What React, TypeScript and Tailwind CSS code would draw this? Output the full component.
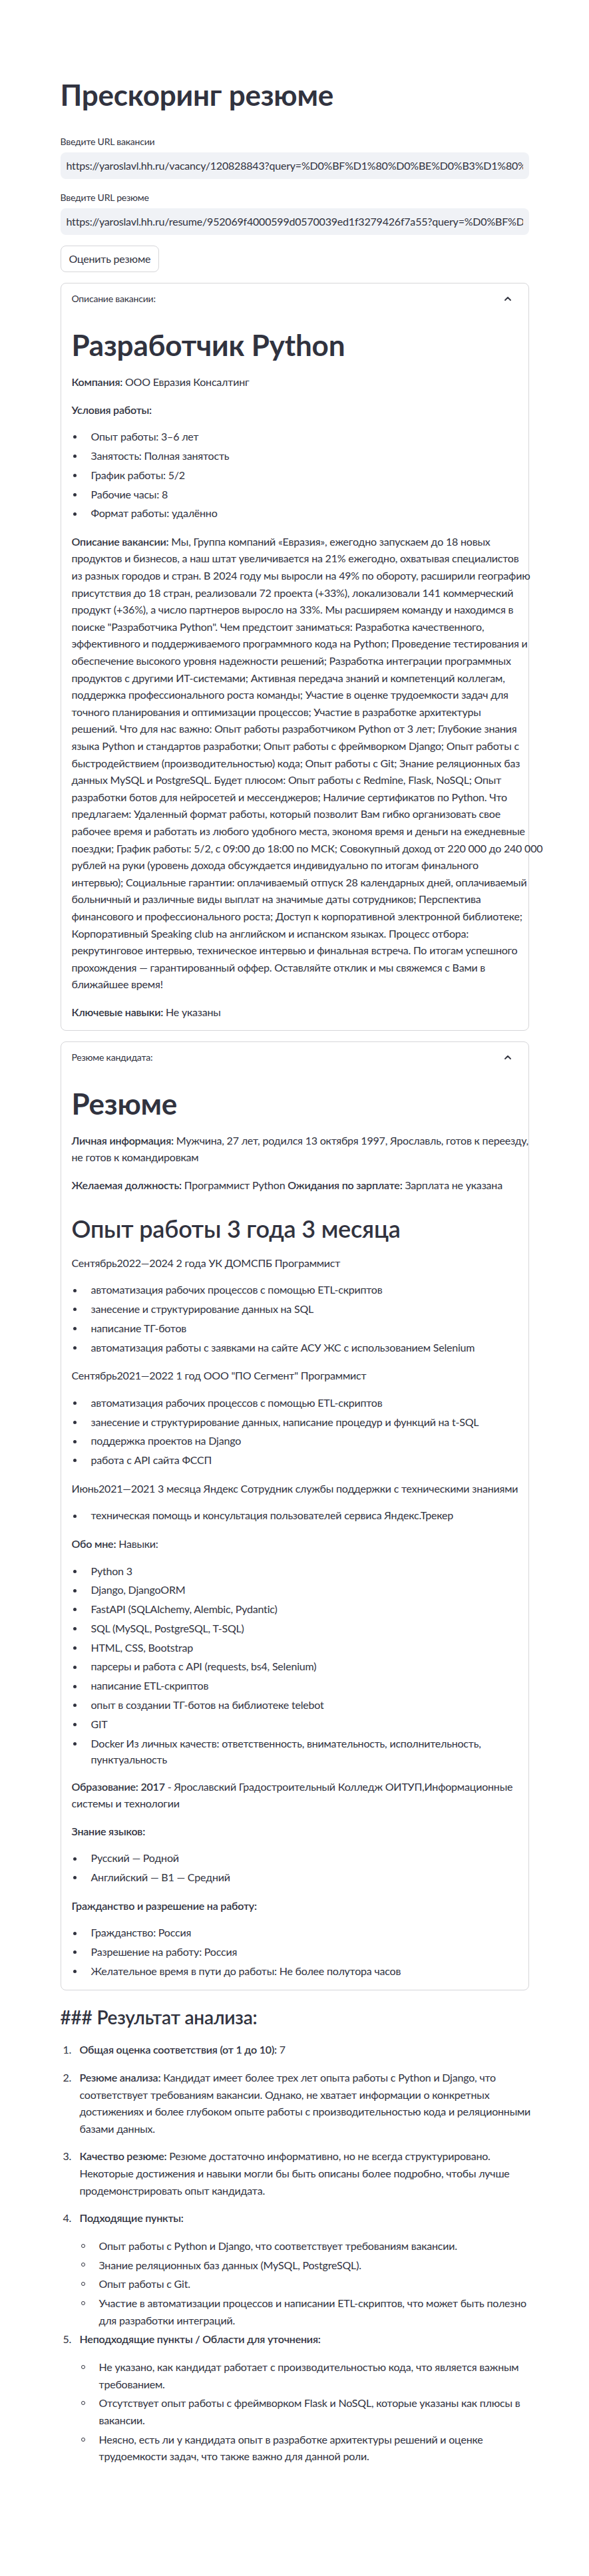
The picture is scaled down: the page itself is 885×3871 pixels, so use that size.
import React from "react";

const vacancyText: string[] = [
  " Мы, Группа компаний «Евразия», ежегодно запускаем до 18 новых",
  "продуктов и бизнесов, а наш штат увеличивается на 21% ежегодно, охватывая специалистов",
  "из разных городов и стран. В 2024 году мы выросли на 49% по обороту, расширили географию",
  "присутствия до 18 стран, реализовали 72 проекта (+33%), локализовали 141 коммерческий",
  "продукт (+36%), а число партнеров выросло на 33%. Мы расширяем команду и находимся в",
  "поиске \"Разработчика Python\". Чем предстоит заниматься: Разработка качественного,",
  "эффективного и поддерживаемого программного кода на Python; Проведение тестирования и",
  "обеспечение высокого уровня надежности решений; Разработка интеграции программных",
  "продуктов с другими ИТ-системами; Активная передача знаний и компетенций коллегам,",
  "поддержка профессионального роста команды; Участие в оценке трудоемкости задач для",
  "точного планирования и оптимизации процессов; Участие в разработке архитектуры",
  "решений. Что для нас важно: Опыт работы разработчиком Python от 3 лет; Глубокие знания",
  "языка Python и стандартов разработки; Опыт работы с фреймворком Django; Опыт работы с",
  "быстродействием (производительностью) кода; Опыт работы с Git; Знание реляционных баз",
  "данных MySQL и PostgreSQL. Будет плюсом: Опыт работы с Redmine, Flask, NoSQL; Опыт",
  "разработки ботов для нейросетей и мессенджеров; Наличие сертификатов по Python. Что",
  "предлагаем: Удаленный формат работы, который позволит Вам гибко организовать свое",
  "рабочее время и работать из любого удобного места, экономя время и деньги на ежедневные",
  "поездки; График работы: 5/2, с 09:00 до 18:00 по МСК; Совокупный доход от 220 000 до 240 000",
  "рублей на руки (уровень дохода обсуждается индивидуально по итогам финального",
  "интервью); Социальные гарантии: оплачиваемый отпуск 28 календарных дней, оплачиваемый",
  "больничный и различные виды выплат на значимые даты сотрудников; Перспектива",
  "финансового и профессионального роста; Доступ к корпоративной электронной библиотеке;",
  "Корпоративный Speaking club на английском и испанском языках. Процесс отбора:",
  "рекрутинговое интервью, техническое интервью и финальная встреча. По итогам успешного",
  "прохождения — гарантированный оффер. Оставляйте отклик и мы свяжемся с Вами в",
  "ближайшее время!",
];

function Lines({ lines }: { lines: string[] }) {
  return (
    <>
      {lines.map((l, i) => (
        <React.Fragment key={i}>
          {i > 0 && <br />}
          {l}
        </React.Fragment>
      ))}
    </>
  );
}

function Dot() {
  return (
    <span className="w-[29px] shrink-0 h-[25.6px] flex items-center pl-[2px]">
      <span className="w-[5px] h-[5px] rounded-full bg-[#31333f]" />
    </span>
  );
}

function Ring() {
  return (
    <span className="w-[29px] shrink-0 h-[25.6px] flex items-center pl-[2px]">
      <span className="w-[6px] h-[6px] rounded-full border border-[#31333f]" />
    </span>
  );
}

function Bullets({ items, className = "mb-4" }: { items: (string | string[])[]; className?: string }) {
  return (
    <ul className={className}>
      {items.map((it, i) => (
        <li key={i} className="flex my-[3.2px]">
          <Dot />
          <span className="whitespace-nowrap">
            {Array.isArray(it) ? <Lines lines={it} /> : it}
          </span>
        </li>
      ))}
    </ul>
  );
}

function SubList({ items }: { items: (string | string[])[] }) {
  return (
    <ul className="flex flex-col gap-[3.2px]">
      {items.map((it, i) => (
        <li key={i} className="flex">
          <Ring />
          <span className="whitespace-nowrap">
            {Array.isArray(it) ? <Lines lines={it} /> : it}
          </span>
        </li>
      ))}
    </ul>
  );
}

function Chevron() {
  return (
    <svg width="14" height="14" viewBox="0 0 14 14" fill="none" className="mr-[8px]">
      <path d="M3 9 L7 5 L11 9" stroke="#31333f" strokeWidth="1.8" strokeLinecap="round" strokeLinejoin="round" />
    </svg>
  );
}

function Expander({ title, children, pb }: { title: string; children: React.ReactNode; pb: string }) {
  return (
    <div className="border border-[#d6d6d9] rounded-lg">
      <div className="flex items-center justify-between px-4 py-3 text-sm leading-[1.6]">
        <span>{title}</span>
        <Chevron />
      </div>
      <div className={`px-4 ${pb}`}>{children}</div>
    </div>
  );
}

function Field({ label, value }: { label: string; value: string }) {
  return (
    <div>
      <div className="h-6 flex items-center text-sm mb-1">{label}</div>
      <input
        readOnly
        value={value}
        className="w-full h-10 rounded-lg bg-[#f0f2f6] border border-transparent px-2 text-base outline-none"
      />
    </div>
  );
}

export default function App() {
  return (
    <div className="min-h-screen bg-white text-[#31333f] font-[family-name:Lato,sans-serif] tracking-[-0.2px]">
      <main className="w-[736px] mx-auto px-4 pt-24 pb-40 flex flex-col gap-4">
        <h1 className="pt-5 pb-4 text-[44px] leading-[1.2] font-bold">Прескоринг резюме</h1>

        <Field
          label="Введите URL вакансии"
          value="https://yaroslavl.hh.ru/vacancy/120828843?query=%D0%BF%D1%80%D0%BE%D0%B3%D1%80%D0%B0%D0%BC%D0%BC%D0%B8%D1%81%D1%82"
        />
        <Field
          label="Введите URL резюме"
          value="https://yaroslavl.hh.ru/resume/952069f4000599d0570039ed1f3279426f7a55?query=%D0%BF%D1%80%D0%BE%D0%B3%D1%80"
        />

        <div>
          <button className="h-10 px-3 rounded-lg border border-[#d6d6d9] bg-white text-base">
            Оценить резюме
          </button>
        </div>

        <Expander title="Описание вакансии:" pb="pb-[14px]">
          <h1 className="pt-5 pb-4 text-[44px] leading-[1.2] font-bold">Разработчик Python</h1>
          <p className="leading-[1.6] mb-4">
            <strong className="font-semibold">Компания:</strong> ООО Евразия Консалтинг
          </p>
          <p className="leading-[1.6] mb-4 font-semibold">Условия работы:</p>
          <Bullets
            items={[
              "Опыт работы: 3–6 лет",
              "Занятость: Полная занятость",
              "График работы: 5/2",
              "Рабочие часы: 8",
              "Формат работы: удалённо",
            ]}
          />
          <p className="leading-[1.6] mb-4 whitespace-nowrap">
            <strong className="font-semibold">Описание вакансии:</strong>
            <Lines lines={vacancyText} />
          </p>
          <p className="leading-[1.6] whitespace-nowrap">
            <strong className="font-semibold">Ключевые навыки:</strong> Не указаны
          </p>
        </Expander>

        <Expander title="Резюме кандидата:" pb="pb-[11px]">
          <h1 className="pt-5 pb-4 text-[44px] leading-[1.2] font-bold">Резюме</h1>
          <p className="leading-[1.6] mb-4 whitespace-nowrap">
            <strong className="font-semibold">Личная информация:</strong> Мужчина, 27 лет, родился 13 октября 1997, Ярославль, готов к переезду,
            <br />
            не готов к командировкам
          </p>
          <p className="leading-[1.6] mb-4 whitespace-nowrap">
            <strong className="font-semibold">Желаемая должность:</strong> Программист Python{" "}
            <strong className="font-semibold">Ожидания по зарплате:</strong> Зарплата не указана
          </p>
          <h2 className="py-4 text-[36px] leading-[1.2] font-semibold">Опыт работы 3 года 3 месяца</h2>
          <p className="leading-[1.6] mb-4 whitespace-nowrap">Сентябрь2022—2024 2 года УК ДОМСПБ Программист</p>
          <Bullets
            items={[
              "автоматизация рабочих процессов с помощью ETL-скриптов",
              "занесение и структурирование данных на SQL",
              "написание ТГ-ботов",
              "автоматизация работы с заявками на сайте АСУ ЖС с использованием Selenium",
            ]}
          />
          <p className="leading-[1.6] mb-4 whitespace-nowrap">Сентябрь2021—2022 1 год ООО "ПО Сегмент" Программист</p>
          <Bullets
            items={[
              "автоматизация рабочих процессов с помощью ETL-скриптов",
              "занесение и структурирование данных, написание процедур и функций на t-SQL",
              "поддержка проектов на Django",
              "работа с API сайта ФССП",
            ]}
          />
          <p className="leading-[1.6] mb-4 whitespace-nowrap">
            Июнь2021—2021 3 месяца Яндекс Сотрудник службы поддержки с техническими знаниями
          </p>
          <Bullets items={["техническая помощь и консультация пользователей сервиса Яндекс.Трекер"]} />
          <p className="leading-[1.6] mb-4 whitespace-nowrap">
            <strong className="font-semibold">Обо мне:</strong> Навыки:
          </p>
          <Bullets
            items={[
              "Python 3",
              "Django, DjangoORM",
              "FastAPI (SQLAlchemy, Alembic, Pydantic)",
              "SQL (MySQL, PostgreSQL, T-SQL)",
              "HTML, CSS, Bootstrap",
              "парсеры и работа с API (requests, bs4, Selenium)",
              "написание ETL-скриптов",
              "опыт в создании ТГ-ботов на библиотеке telebot",
              "GIT",
              ["Docker Из личных качеств: ответственность, внимательность, исполнительность,", "пунктуальность"],
            ]}
          />
          <p className="leading-[1.6] mb-4 whitespace-nowrap">
            <strong className="font-semibold">Образование: 2017</strong> - Ярославский Градостроительный Колледж ОИТУП,Информационные
            <br />
            системы и технологии
          </p>
          <p className="leading-[1.6] mb-4 font-semibold">Знание языков:</p>
          <Bullets items={["Русский — Родной", "Английский — B1 — Средний"]} />
          <p className="leading-[1.6] mb-4 font-semibold">Гражданство и разрешение на работу:</p>
          <Bullets
            className="mb-0"
            items={[
              "Гражданство: Россия",
              "Разрешение на работу: Россия",
              "Желательное время в пути до работы: Не более полутора часов",
            ]}
          />
        </Expander>

        <div>
          <h3 className="pt-2 pb-4 text-[28px] leading-[1.2] font-semibold">### Результат анализа:</h3>
          <ol className="mt-[3.2px] flex flex-col leading-[1.6]">
            <li className="flex mb-4">
              <span className="w-[29px] shrink-0 pl-[4px]">1.</span>
              <p className="whitespace-nowrap">
                <strong className="font-semibold">Общая оценка соответствия (от 1 до 10):</strong> 7
              </p>
            </li>
            <li className="flex mb-4">
              <span className="w-[29px] shrink-0 pl-[4px]">2.</span>
              <p className="whitespace-nowrap">
                <strong className="font-semibold">Резюме анализа:</strong> Кандидат имеет более трех лет опыта работы с Python и Django, что
                <br />
                соответствует требованиям вакансии. Однако, не хватает информации о конкретных
                <br />
                достижениях и более глубоком опыте работы с производительностью кода и реляционными
                <br />
                базами данных.
              </p>
            </li>
            <li className="flex mb-4">
              <span className="w-[29px] shrink-0 pl-[4px]">3.</span>
              <p className="whitespace-nowrap">
                <strong className="font-semibold">Качество резюме:</strong> Резюме достаточно информативно, но не всегда структурировано.
                <br />
                Некоторые достижения и навыки могли бы быть описаны более подробно, чтобы лучше
                <br />
                продемонстрировать опыт кандидата.
              </p>
            </li>
            <li className="flex mb-[3.2px]">
              <span className="w-[29px] shrink-0 pl-[4px]">4.</span>
              <div className="flex flex-col gap-4">
                <p className="whitespace-nowrap">
                  <strong className="font-semibold">Подходящие пункты:</strong>
                </p>
                <SubList
                  items={[
                    "Опыт работы с Python и Django, что соответствует требованиям вакансии.",
                    "Знание реляционных баз данных (MySQL, PostgreSQL).",
                    "Опыт работы с Git.",
                    ["Участие в автоматизации процессов и написании ETL-скриптов, что может быть полезно", "для разработки интеграций."],
                  ]}
                />
              </div>
            </li>
            <li className="flex">
              <span className="w-[29px] shrink-0 pl-[4px]">5.</span>
              <div className="flex flex-col gap-4">
                <p className="whitespace-nowrap">
                  <strong className="font-semibold">Неподходящие пункты / Области для уточнения:</strong>
                </p>
                <SubList
                  items={[
                    ["Не указано, как кандидат работает с производительностью кода, что является важным", "требованием."],
                    ["Отсутствует опыт работы с фреймворком Flask и NoSQL, которые указаны как плюсы в", "вакансии."],
                    ["Неясно, есть ли у кандидата опыт в разработке архитектуры решений и оценке", "трудоемкости задач, что также важно для данной роли."],
                  ]}
                />
              </div>
            </li>
          </ol>
        </div>
      </main>
    </div>
  );
}
